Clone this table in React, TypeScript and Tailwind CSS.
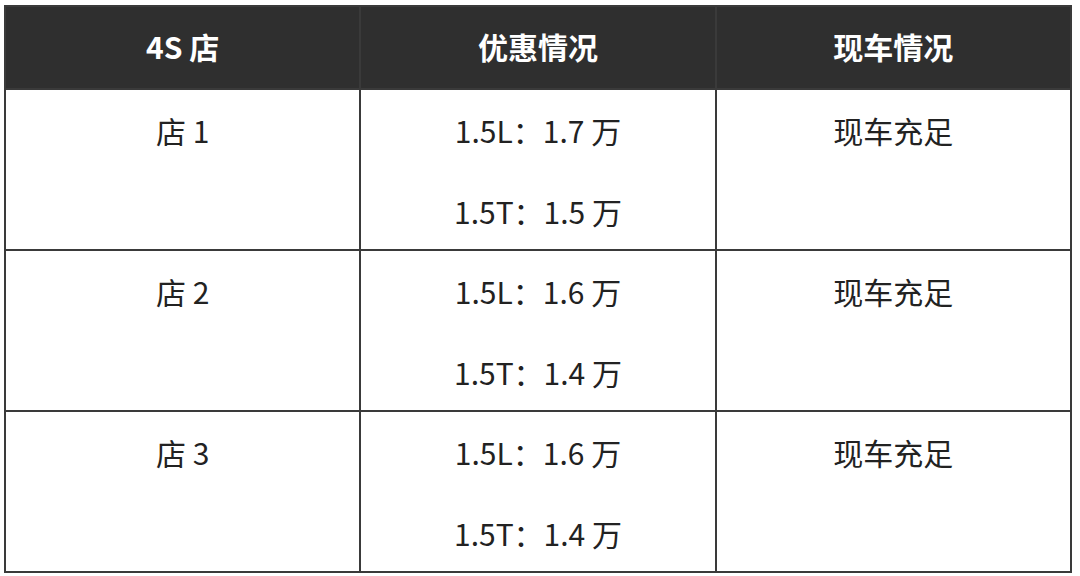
const rows = [
  { store: "店 1", offers: ["1.5L：1.7 万", "1.5T：1.5 万"], stock: "现车充足" },
  { store: "店 2", offers: ["1.5L：1.6 万", "1.5T：1.4 万"], stock: "现车充足" },
  { store: "店 3", offers: ["1.5L：1.6 万", "1.5T：1.4 万"], stock: "现车充足" },
];

const headers = ["4S 店", "优惠情况", "现车情况"];

export default function App() {
  return (
    <div
      className="w-[1080px] h-[576px] bg-white pt-[5px] pl-[4px]"
      style={{ fontFamily: '"Noto Sans CJK SC", "Noto Sans", sans-serif' }}
    >
      <table className="w-[1068px] table-fixed border-collapse border-2 border-[#3a3a3a] text-[30px] text-[#222]">
        <thead>
          <tr className="h-[83px] bg-[#2f2f2f] text-white">
            {headers.map((h) => (
              <th key={h} className="border-2 border-[#3a3a3a] font-bold text-center align-middle pb-[3px]">
                {h}
              </th>
            ))}
          </tr>
        </thead>
        <tbody>
          {rows.map((r) => (
            <tr key={r.store} className="h-[161px]">
              <td className="border-2 border-[#3a3a3a] align-top text-center pt-[17px]">
                <div className="leading-[46px]">{r.store}</div>
              </td>
              <td className="border-2 border-[#3a3a3a] align-top text-center pt-[17px]">
                <div className="flex flex-col gap-[35px]">
                  {r.offers.map((o) => (
                    <div key={o} className="leading-[46px]">
                      {o}
                    </div>
                  ))}
                </div>
              </td>
              <td className="border-2 border-[#3a3a3a] align-top text-center pt-[17px]">
                <div className="leading-[46px]">{r.stock}</div>
              </td>
            </tr>
          ))}
        </tbody>
      </table>
    </div>
  );
}
